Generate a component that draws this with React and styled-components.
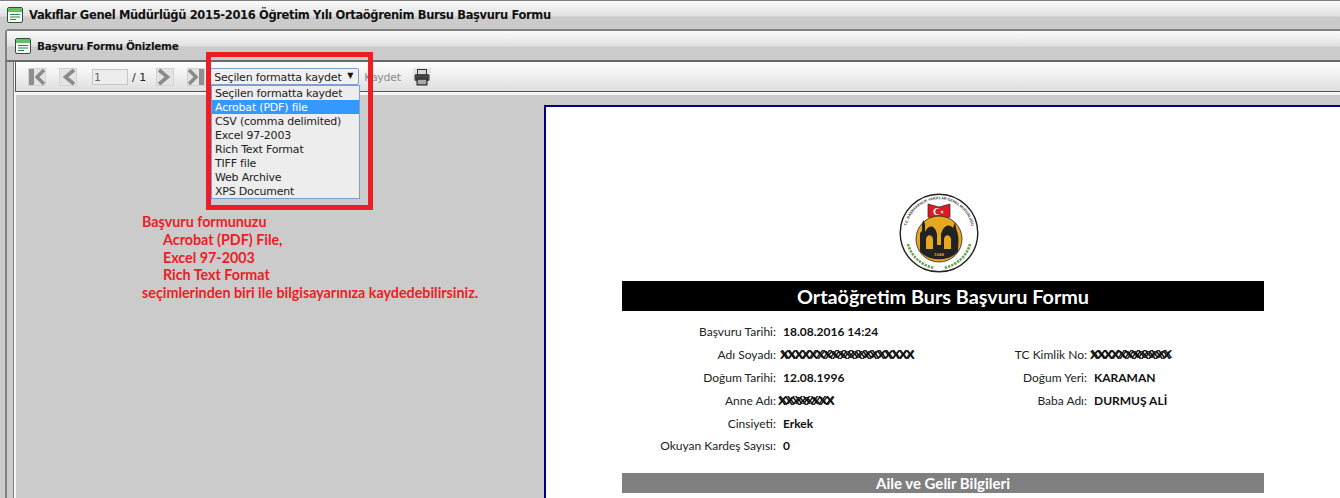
import React from "react";
import styled, {createGlobalStyle} from "styled-components";

const GlobalStyle = createGlobalStyle`
    html, body {
        margin: 0;
        height: 498px;
        overflow: hidden;
        background: #cbcbcb;
    }
`;

const headerBg = "linear-gradient(to bottom, #fbfbfb 0, #e0e0e0 15px, #cbcbcb 16px, #cbcbcb 100%)";

const Outer = styled.div`
    width: 1340px;
    height: 498px;
    display: flex;
    flex-direction: column;
    overflow: hidden;
    border-top: 1px solid #808080;
    box-sizing: border-box;
    background: #cbcbcb;
`;

const TitleBar = styled.div`
    height: 28px;
    flex: none;
    display: flex;
    align-items: center;
    gap: 6px;
    padding-left: 7px;
    background: ${headerBg};
    font: bold 11.5px "DejaVu Sans", sans-serif;
    letter-spacing: -0.35px;
    color: #111;
`;

const Inner = styled.div`
    margin-left: 5px;
    flex: 1;
    min-height: 0;
    display: flex;
    flex-direction: column;
    border-left: 2px solid #808080;
    border-top: 2px solid #808080;
    border-top-left-radius: 4px;
`;

const PanelHeader = styled.div`
    height: 29px;
    flex: none;
    display: flex;
    align-items: center;
    gap: 6px;
    padding-left: 8px;
    background: ${headerBg};
    border-bottom: 2px solid #6a6a6a;
    font: bold 10.5px "DejaVu Sans", sans-serif;
    letter-spacing: -0.3px;
    color: #111;
`;

const PanelBody = styled.div`
    flex: 1;
    min-height: 0;
    margin-left: 6px;
    padding-left: 1px;
    display: flex;
    flex-direction: column;
    background: #f6f6f6;
    border-left: 1px solid #808080;
`;

const Toolbar = styled.div`
    height: 29px;
    flex: none;
    display: flex;
    align-items: center;
    background: linear-gradient(to bottom, #fefefe 0, #dfdfdf 100%);
    border-left: 1px solid #555;
    border-bottom: 1px solid #555;
    position: relative;
`;

const NavButton = styled.span`
    width: 18px;
    height: 18px;
    flex: none;
    display: flex;
    margin-left: ${props => props.$gap}px;
    background: #e4e4e4;
    box-shadow: inset 0 0 0 1px #d2d2d2;
`;

const PageInput = styled.span`
    width: 36px;
    height: 16px;
    flex: none;
    box-sizing: border-box;
    margin-left: 15px;
    border: 1px solid #c6c6c6;
    background: #ededed;
    padding-left: 1px;
    font: 11px/15px "DejaVu Sans", sans-serif;
    color: #666;
`;

const PageTotal = styled.span`
    margin: 1px 10px 0 4px;
    font: 11px "DejaVu Sans", sans-serif;
    color: #222;
`;

const SelectBox = styled.div`
    width: 149px;
    height: 17px;
    flex: none;
    margin-left: 5px;
    box-sizing: border-box;
    padding: 1px 0 0 3px;
    display: flex;
    align-items: center;
    justify-content: space-between;
    background: #f1f1f1;
    border: 1px solid #7c9fd3;
    border-radius: 2px;
    font: 11px "DejaVu Sans", sans-serif;
    letter-spacing: -0.2px;
    color: #222;
`;

const Arrow = styled.span`
    margin-right: 5px;
    margin-top: -3px;
    font-size: 8px;
    color: #111;
`;

const SaveLabel = styled.span`
    margin: 1px 0 0 5px;
    font: 11px "DejaVu Sans", sans-serif;
    letter-spacing: -0.3px;
    color: #8d8d8d;
`;

const PrintButton = styled.span`
    margin-left: 12px;
    width: 18px;
    height: 18px;
    display: flex;
    background: #e4e4e4;
`;

const Dropdown = styled.ul`
    position: absolute;
    left: 195px;
    top: 23px;
    width: 147px;
    margin: 0;
    padding: 0;
    list-style: none;
    background: #ededed;
    border: 1px solid #7c9fd3;
    z-index: 3;
`;

const DropItem = styled.li`
    height: 14px;
    padding-left: 3px;
    font: 11px/16px "DejaVu Sans", sans-serif;
    letter-spacing: -0.2px;
    color: ${props => props.$active ? "#fff" : "#222"};
    background: ${props => props.$active ? "#3399ff" : "transparent"};
`;

const RedFrame = styled.div`
    position: absolute;
    left: 190px;
    top: -10px;
    width: 157px;
    height: 148px;
    border: 5px solid #ee1c25;
    z-index: 4;
    pointer-events: none;
`;

const Stage = styled.div`
    flex: 1;
    min-height: 0;
    border-top: 3px solid #f6f6f6;
    border-left: 1px solid #f6f6f6;
    display: flex;
    background: #cbcbcb;
`;

const Note = styled.div`
    width: 528px;
    flex: none;
    box-sizing: border-box;
    padding: 118px 0 0 126px;
    font: bold 14.3px/17.8px Lato, sans-serif;
    color: #ee1c25;
`;

const NoteIndent = styled.div`
    padding-left: 21px;
`;

const Page = styled.div`
    flex: 1;
    margin-top: 10px;
    background: #fff;
    border-top: 2px solid #000080;
    border-left: 2px solid #000080;
    padding: 84px 0 0 76px;
    display: flex;
    flex-direction: column;
`;

const LogoWrap = styled.div`
    width: 642px;
    height: 88px;
    box-sizing: border-box;
    padding: 2px 0 0 277px;
`;

const FormTitle = styled.div`
    width: 642px;
    height: 30px;
    margin-top: 2px;
    background: #000;
    color: #fff;
    display: flex;
    align-items: center;
    justify-content: center;
    font: bold 19.8px Lato, sans-serif;
`;

const Fields = styled.div`
    width: 642px;
    margin-top: 9.5px;
    display: grid;
    grid-template-columns: 157px 200px 111px 1fr;
    grid-auto-rows: 22.8px;
    align-items: center;
    font: 12px Lato, sans-serif;
    color: #222;
`;

const Label = styled.div`
    text-align: right;
    padding-right: 3px;
    white-space: nowrap;
`;

const Value = styled.div`
    padding-left: 4px;
    font-weight: bold;
    color: #111;
    white-space: nowrap;
`;

const Masked = styled.span`
    position: relative;
    margin-left: ${props => props.$shift}px;
    letter-spacing: ${props => props.$tight}px;
    &::after {
        content: "${props => props.$over}";
        position: absolute;
        left: 1px;
        top: -1px;
        letter-spacing: ${props => props.$overTight}px;
    }
`;

const SectionBar = styled.div`
    width: 642px;
    height: 20px;
    margin-top: 15.5px;
    background: #808080;
    color: #fff;
    display: flex;
    align-items: center;
    justify-content: center;
    font: bold 15px Lato, sans-serif;
`;

const WindowIcon = () => (
    <svg width="16" height="16" viewBox="0 0 16 16">
        <rect x="0.5" y="0.5" width="15" height="15" rx="1.5" fill="#fdfdfd" stroke="#2f4f3a" />
        <rect x="1" y="1" width="14" height="4" fill="#62c06a" />
        <path d="M3 7.5H13M3 10H13M3 12.5H9" stroke="#1e8a3a" strokeWidth="1.2" />
    </svg>
);

const FirstIcon = () => (
    <svg width="18" height="18" viewBox="0 0 18 18">
        <rect x="1" y="1" width="5" height="16" fill="#8f8f8f" />
        <path d="M16 2L9 9L16 16" fill="none" stroke="#8a8a8a" strokeWidth="3.4" />
    </svg>
);

const PrevIcon = () => (
    <svg width="18" height="18" viewBox="0 0 18 18">
        <path d="M15 2L6.5 9L15 16" fill="none" stroke="#8a8a8a" strokeWidth="3.6" />
    </svg>
);

const NextIcon = () => (
    <svg width="18" height="18" viewBox="0 0 18 18">
        <path d="M3 2L11.5 9L3 16" fill="none" stroke="#8a8a8a" strokeWidth="3.6" />
    </svg>
);

const LastIcon = () => (
    <svg width="18" height="18" viewBox="0 0 18 18">
        <path d="M2 2L9 9L2 16" fill="none" stroke="#8a8a8a" strokeWidth="3.4" />
        <rect x="12" y="1" width="5" height="16" fill="#8f8f8f" />
    </svg>
);

const PrintIcon = () => (
    <svg width="18" height="18" viewBox="0 0 18 18">
        <rect x="4.5" y="1.5" width="9" height="5" fill="#d8d8d8" stroke="#333" />
        <rect x="1.5" y="6" width="15" height="7" rx="1.5" fill="#444" />
        <rect x="4" y="11" width="10" height="6" fill="#777" stroke="#222" />
        <path d="M5 13H13M5 15H13" stroke="#ddd" />
    </svg>
);

// vakif armasi, referanstaki kucuk logo
const Logo = () => (
    <svg width="80" height="80" viewBox="0 0 80 80">
        <defs>
            <path id="ringText" d="M7.5 45A33 33 0 1 1 72.5 45" />
        </defs>
        <circle cx="40" cy="40" r="38.8" fill="#fff" stroke="#222" strokeWidth="1.4" />
        <text fontFamily="Liberation Sans, sans-serif" fontWeight="bold" fontSize="3.6" fill="#333">
            <textPath href="#ringText" startOffset="50%" textAnchor="middle">T.C. BAŞBAKANLIK VAKIFLAR GENEL MÜDÜRLÜĞÜ</textPath>
        </text>
        <path d="M29 11L40 14L51 11V24L40 27L29 24Z" fill="#dd1a22" stroke="#222" strokeWidth="0.7" />
        <circle cx="38" cy="18.5" r="3.6" fill="#fff" />
        <circle cx="39.2" cy="18.5" r="2.9" fill="#dd1a22" />
        <path d="M43 17L43.5 18.4L45 18.4L43.8 19.3L44.3 20.7L43 19.8L41.8 20.7L42.3 19.3L41 18.4L42.5 18.4Z" fill="#fff" />
        <circle cx="40" cy="46" r="23" fill="#e4a821" stroke="#222" strokeWidth="0.8" />
        <path d="M21 58V40L23 38V31L24.5 27L26 31V39C30 31 36 32 38 41V52H42V41C45 31 51 31 54 35L56 29L57.5 37C59 40 59.5 44 59.5 48L59 58C52 69 28 69 21 58Z" fill="#222" />
        <path d="M27 46C28 41 33 41 34 46V56H27Z" fill="#e4a821" />
        <path d="M45 46C46 41 51 41 52 46V56H45Z" fill="#e4a821" />
        <text x="40" y="63" textAnchor="middle" fontFamily="Liberation Sans, sans-serif" fontWeight="bold" fontSize="4.4" fill="#e4a821">1048</text>
        <path d="M9 51C12 63 22 72 35 75M71 51C68 63 58 72 45 75" fill="none" stroke="#6ea552" strokeWidth="2.6" strokeDasharray="2.4 1" />
    </svg>
);

const App = () => {
    return (
        <>
            <GlobalStyle />
            <Outer>
                <TitleBar>
                    <WindowIcon />
                    Vakıflar Genel Müdürlüğü 2015-2016 Öğretim Yılı Ortaöğrenim Bursu Başvuru Formu
                </TitleBar>
                <Inner>
                    <PanelHeader>
                        <WindowIcon />
                        Başvuru Formu Önizleme
                    </PanelHeader>
                    <PanelBody>
                        <Toolbar>
                            <NavButton $gap={12}><FirstIcon /></NavButton>
                            <NavButton $gap={13}><PrevIcon /></NavButton>
                            <PageInput>1</PageInput>
                            <PageTotal>/ 1</PageTotal>
                            <NavButton $gap={0}><NextIcon /></NavButton>
                            <NavButton $gap={13}><LastIcon /></NavButton>
                            <SelectBox>
                                Seçilen formatta kaydet
                                <Arrow>▼</Arrow>
                            </SelectBox>
                            <SaveLabel>Kaydet</SaveLabel>
                            <PrintButton><PrintIcon /></PrintButton>
                            <Dropdown>
                                <DropItem>Seçilen formatta kaydet</DropItem>
                                <DropItem $active>Acrobat (PDF) file</DropItem>
                                <DropItem>CSV (comma delimited)</DropItem>
                                <DropItem>Excel 97-2003</DropItem>
                                <DropItem>Rich Text Format</DropItem>
                                <DropItem>TIFF file</DropItem>
                                <DropItem>Web Archive</DropItem>
                                <DropItem>XPS Document</DropItem>
                            </Dropdown>
                            <RedFrame />
                        </Toolbar>
                        <Stage>
                            <Note>
                                Başvuru formunuzu
                                <NoteIndent>Acrobat (PDF) File,</NoteIndent>
                                <NoteIndent>Excel 97-2003</NoteIndent>
                                <NoteIndent>Rich Text Format</NoteIndent>
                                seçimlerinden biri ile bilgisayarınıza kaydedebilirsiniz.
                            </Note>
                            <Page>
                                <LogoWrap><Logo /></LogoWrap>
                                <FormTitle>Ortaöğretim Burs Başvuru Formu</FormTitle>
                                <Fields>
                                    <Label>Başvuru Tarihi:</Label>
                                    <Value>18.08.2016 14:24</Value>
                                    <span />
                                    <span />
                                    <Label>Adı Soyadı:</Label>
                                    <Value><Masked $shift={-3} $tight={-0.6} $overTight={-1.1} $over="XXXXXXXXXXXXXXXXXXX">XXXXXXXXXXXXXXXXXX</Masked></Value>
                                    <Label>TC Kimlik No:</Label>
                                    <Value><Masked $shift={-4} $tight={-0.8} $overTight={-1.4} $over="XXXXXXXXXXXX">XXXXXXXXXXX</Masked></Value>
                                    <Label>Doğum Tarihi:</Label>
                                    <Value>12.08.1996</Value>
                                    <Label>Doğum Yeri:</Label>
                                    <Value>KARAMAN</Value>
                                    <Label>Anne Adı:</Label>
                                    <Value><Masked $shift={-5} $tight={-1.1} $overTight={-0.2} $over="XXXXXXX">XXXXXXXX</Masked></Value>
                                    <Label>Baba Adı:</Label>
                                    <Value>DURMUŞ ALİ</Value>
                                    <Label>Cinsiyeti:</Label>
                                    <Value>Erkek</Value>
                                    <span />
                                    <span />
                                    <Label>Okuyan Kardeş Sayısı:</Label>
                                    <Value>0</Value>
                                </Fields>
                                <SectionBar>Aile ve Gelir Bilgileri</SectionBar>
                            </Page>
                        </Stage>
                    </PanelBody>
                </Inner>
            </Outer>
        </>
    );
};

export default App;
